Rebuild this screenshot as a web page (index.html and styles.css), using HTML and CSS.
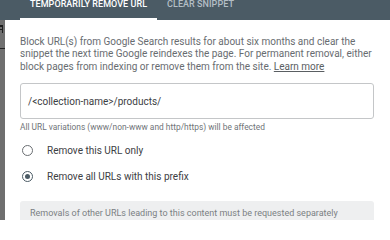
FILE: index.html
```html
<!DOCTYPE html>
<html>
<head>
<meta charset="utf-8">
<link rel="stylesheet" href="styles.css">
</head>
<body>
<div class="page">
  <div class="tabs">
    <div class="tab active">Temporarily remove URL</div>
    <div class="tab">Clear snippet</div>
  </div>
  <div class="main">
    <div class="backdrop"><span class="mark"></span><span class="rule"></span></div>
    <div class="dialog">
      <p class="desc">Block URL(s) from Google Search results for about six months and clear the snippet the next time Google reindexes the page. For permanent removal, either block pages from indexing or remove them from the site. <a class="link">Learn more</a></p>
      <div class="field">/&lt;collection-name&gt;/products/</div>
      <div class="hint">All URL variations (www/non-www and http/https) will be affected</div>
      <div class="options">
        <label class="option"><span class="radio"></span>Remove this URL only</label>
        <label class="option"><span class="radio checked"></span>Remove all URLs with this prefix</label>
      </div>
      <div class="note">Removals of other URLs leading to this content must be requested separately</div>
    </div>
  </div>
</div>
</body>
</html>
```
FILE: styles.css
```css
* { box-sizing: border-box; }
html, body { margin: 0; padding: 0; background: #fff; }
body { font-family: Roboto, "Noto Sans", sans-serif; width: 390px; height: 220px; overflow: hidden; }
.page { display: flex; flex-direction: column; height: 220px; }
.tabs {
  background: #4b5b65;
  height: 19.5px;
  display: flex;
  align-items: flex-start;
  padding-left: 20px;
}
.tab {
  text-transform: uppercase;
  font-size: 9px;
  font-weight: 500;
  letter-spacing: 0.05px;
  color: #b3bec5;
  height: 19.5px;
  padding: 0 10px;
  line-height: 9px;
  border-bottom: 2px solid transparent;
}
.tab.active { color: #fff; border-bottom-color: #fff; }
.main { display: flex; flex: 1; }
.backdrop {
  width: 5px;
  background: #6f6f6f;
  position: relative;
  overflow: hidden;
}
.backdrop .mark {
  position: absolute; left: 0; top: 5px; width: 3px; height: 8px;
  border-top: 2px solid #1d1d1d; border-right: 1.5px solid #1d1d1d;
}
.backdrop .mark::after {
  content: ""; position: absolute; left: 0; top: 2px; width: 3px; height: 1.5px; background: #1d1d1d;
}
.backdrop .rule {
  position: absolute; left: 0; top: 28px; width: 5px; height: 1px; background: #222;
}
.dialog { flex: 1; padding: 16px 16px 0 15px; display: flex; flex-direction: column; }
.desc {
  margin: 0;
  font-size: 10px;
  line-height: 12.5px;
  color: #686c70;
}
.link { color: #5a5e62; text-decoration: underline; }
.field {
  margin-top: 10px;
  height: 36px;
  border: 1px solid #c4c6c8;
  border-radius: 3px;
  padding-left: 7px;
  display: flex;
  align-items: center;
  font-size: 10px;
  color: #3c4043;
}
.hint { font-size: 8.4px; color: #707478; margin-top: 3px; line-height: 10px; }
.options { display: flex; flex-direction: column; gap: 14px; margin-top: 12px; }
.option { display: flex; align-items: center; font-size: 10px; color: #3c4043; height: 12px; }
.radio {
  width: 11px; height: 11px; border: 1.3px solid #6a6e72; border-radius: 50%;
  margin-left: 2px; margin-right: 14px; display: inline-flex; align-items: center; justify-content: center;
}
.radio.checked { border-color: #4b5b65; }
.radio.checked::after { content: ""; width: 5px; height: 5px; border-radius: 50%; background: #4b5b65; }
.note {
  margin-top: 19px;
  background: #eeeff0;
  border-radius: 3px;
  padding: 7px 10px 20px;
  font-size: 9px;
  color: #7b7f83;
}
```
